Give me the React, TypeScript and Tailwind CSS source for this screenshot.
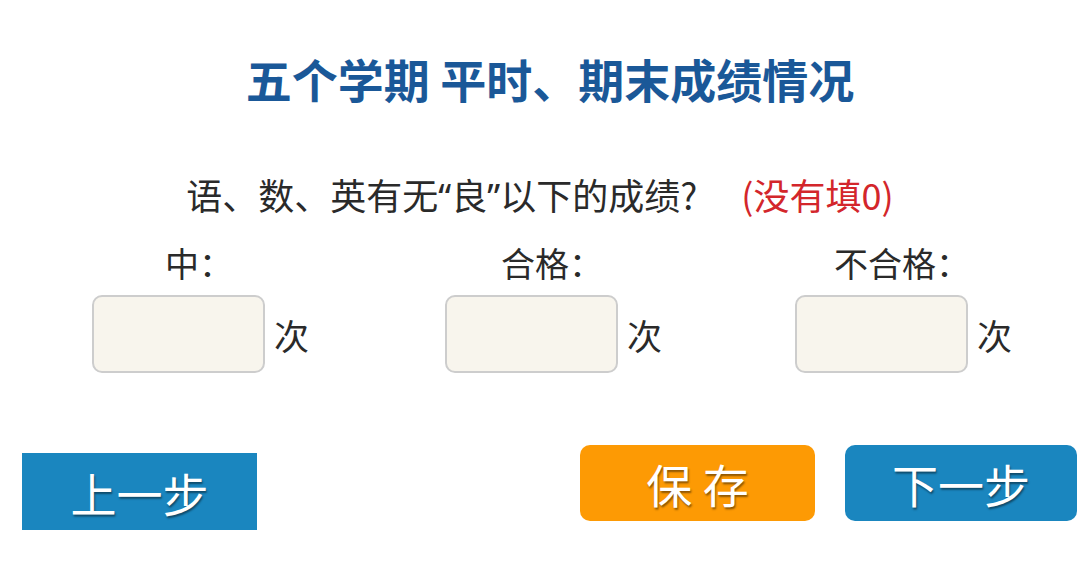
const counts = [
  { label: '中：', gap: 'ml-0' },
  { label: '合格：', gap: 'ml-[139px]' },
  { label: '不合格：', gap: 'ml-[136px]' },
]

const btnText = "text-[46px] leading-none text-white [text-shadow:1px_2px_2px_rgba(0,0,0,0.45)]"

export default function App() {
  return (
    <div className="w-[1080px] h-[570px] bg-white font-['Noto_Sans_CJK_SC',sans-serif] text-[#222]">
      <h1 className="pt-[55px] pl-[20px] text-center text-[46px] leading-[46px] font-bold text-[#1a5898]">
        五个学期 平时、期末成绩情况
      </h1>

      <p className="mt-[75px] text-center text-[36px] leading-[36px] text-[#2a2a2a]">
        语、数、英有无<span className="font-['Noto_Sans',sans-serif] leading-[0px]">“</span>良
        <span className="font-['Noto_Sans',sans-serif] leading-[0px]">”</span>以下的成绩?
        <span className="ml-[44px] text-[#d3262b]">(没有填0)</span>
      </p>

      {/* count inputs */}
      <div className="mt-[34px] pl-[92px] flex">
        {counts.map((c) => (
          <div key={c.label} className={`${c.gap} w-[214px] flex flex-col`}>
            <div className="text-center text-[34px] leading-[34px] text-[#2a2a2a]">{c.label}</div>
            <div className="mt-[15px] flex items-center">
              <div className="w-[173px] h-[78px] shrink-0 rounded-[10px] border-2 border-[#cdcdcd] bg-[#f8f5ed]" />
              <span className="ml-[9px] text-[35px] leading-[35px] text-[#2a2a2a]">次</span>
            </div>
          </div>
        ))}
      </div>

      {/* buttons */}
      <div className="mt-[72px] pl-[22px] flex items-start">
        <div className="mt-[8px] w-[235px] h-[77px] bg-[#1a86bf] flex items-center justify-center">
          <span className={btnText}>上一步</span>
        </div>
        <div className="ml-[323px] w-[235px] h-[76px] rounded-[10px] bg-[#fd9a04] flex items-center justify-center">
          <span className={btnText}>保 存</span>
        </div>
        <div className="ml-[30px] w-[232px] h-[76px] rounded-[10px] bg-[#1a86bf] flex items-center justify-center">
          <span className={btnText}>下一步</span>
        </div>
      </div>
    </div>
  )
}
